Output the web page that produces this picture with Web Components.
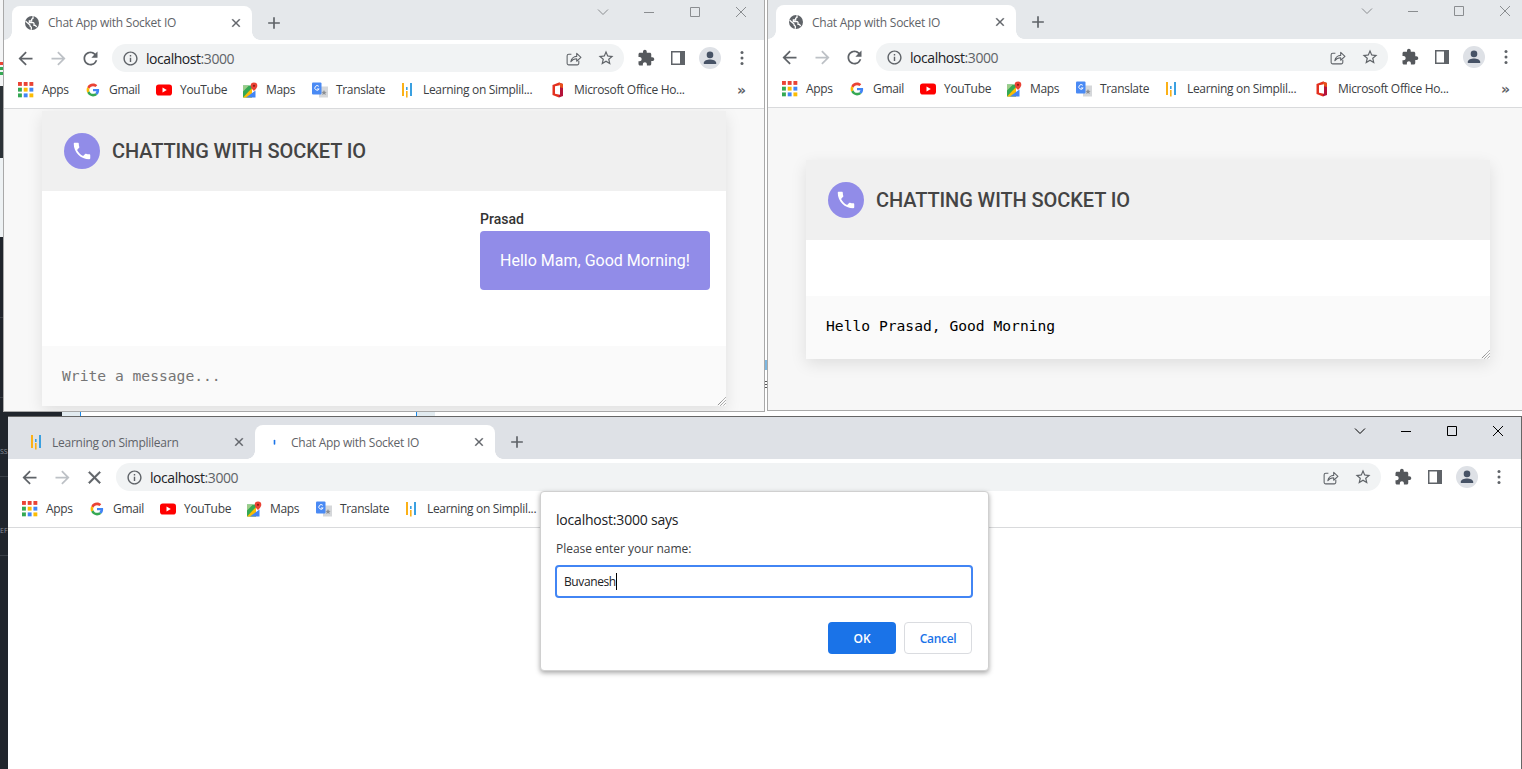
<!DOCTYPE html>
<html>
<head>
<meta charset="utf-8">
<title>Chat App with Socket IO</title>
<style>
    html, body{
        margin: 0;
        padding: 0;
        width: 1522px;
        height: 769px;
        overflow: hidden;
        background: #fff;
        font-family: "Open Sans", "Noto Sans", sans-serif;
    }
</style>
</head>
<body>
<desk-backdrop></desk-backdrop>

<browser-window style="left:3px; top:0; width:762px; height:412px; --strip:40px; --ctl-top:5px; --page:#f8f8f8; --lift:2px;" sides="left right bottom">
    <browser-tab slot="tabs" icon="globe" active>Chat App with Socket IO</browser-tab>
    <book-marks slot="bookmarks" more>
        <book-mark icon="apps" w="27">Apps</book-mark>
        <book-mark icon="google" w="31">Gmail</book-mark>
        <book-mark icon="youtube" w="46">YouTube</book-mark>
        <book-mark icon="maps" w="30">Maps</book-mark>
        <book-mark icon="translate" w="47">Translate</book-mark>
        <book-mark icon="learning" w="111">Learning on Simplil...</book-mark>
        <book-mark icon="office" w="113">Microsoft Office Ho...</book-mark>
    </book-marks>
    <chat-card slot="page" style="--top:2px; --body:155px; --box:60px;">
        <chat-message name="Prasad">Hello Mam, Good Morning!</chat-message>
        <span slot="box" style="color:#757575">Write a message...</span>
    </chat-card>
</browser-window>

<browser-window style="left:767px; top:0; width:762px; height:411px; --strip:39px; --ctl-top:4px; --page:#f7f7f7; --lift:0px;" sides="left right bottom">
    <browser-tab slot="tabs" icon="globe" active>Chat App with Socket IO</browser-tab>
    <book-marks slot="bookmarks" more>
        <book-mark icon="apps" w="27">Apps</book-mark>
        <book-mark icon="google" w="31">Gmail</book-mark>
        <book-mark icon="youtube" w="46">YouTube</book-mark>
        <book-mark icon="maps" w="30">Maps</book-mark>
        <book-mark icon="translate" w="47">Translate</book-mark>
        <book-mark icon="learning" w="111">Learning on Simplil...</book-mark>
        <book-mark icon="office" w="113">Microsoft Office Ho...</book-mark>
    </book-marks>
    <chat-card slot="page" style="--top:52px; --body:56px; --box:63px;">
        <span slot="box" style="color:#000">Hello Prasad, Good Morning</span>
    </chat-card>
</browser-window>

<browser-window style="left:8px; top:416px; width:1514px; height:353px; --strip:42px; --ctl-top:7px; --strip-bg:#dee1e6; --ctl:#000; --page:#fff; --edge:#666; --lift:0px;" sides="top right" loading>
    <browser-tab slot="tabs" icon="learning" style="width:239px">Learning on Simplilearn</browser-tab>
    <browser-tab slot="tabs" icon="spinner" active>Chat App with Socket IO</browser-tab>
    <book-marks slot="bookmarks">
        <book-mark icon="apps" w="27">Apps</book-mark>
        <book-mark icon="google" w="31">Gmail</book-mark>
        <book-mark icon="youtube" w="46">YouTube</book-mark>
        <book-mark icon="maps" w="30">Maps</book-mark>
        <book-mark icon="translate" w="47">Translate</book-mark>
        <book-mark icon="learning" w="111">Learning on Simplil...</book-mark>
    </book-marks>
</browser-window>

<prompt-dialog style="left:540px; top:491px;" value="Buvanesh" origin="localhost:3000 says">Please enter your name:</prompt-dialog>

<script>
// all icons live here, keyed by name
const ICONS = {
    globe: `<svg viewBox="0 0 24 24"><circle cx="12" cy="12" r="10.500" fill="#5f6368"/><path fill="none" stroke="#fff" stroke-width="1.900" d="M2.500 9.500L9 15v1.500l2 2V22M13.500 2v3l-2 1.500V9H8v2.500h6l1 1v3h2l2 2.500"/></svg>`,
    spinner: `<svg viewBox="0 0 16 16"><path d="M7.500 6.500v3.500" stroke="#1a73e8" stroke-width="1.600" fill="none" stroke-linecap="round"/></svg>`,
    close: `<svg viewBox="0 0 24 24"><path fill="#5f6368" stroke="#5f6368" stroke-width=".6" d="M19 6.410L17.590 5 12 10.590 6.410 5 5 6.410 10.590 12 5 17.590 6.410 19 12 13.410 17.590 19 19 17.590 13.410 12z"/></svg>`,
    plus: `<svg viewBox="0 0 24 24"><path fill="#5f6368" d="M19 13h-6v6h-2v-6H5v-2h6V5h2v6h6v2z"/></svg>`,
    back: `<svg viewBox="0 0 24 24"><path fill="#5f6368" d="M20 11H7.830l5.590-5.590L12 4l-8 8 8 8 1.410-1.410L7.830 13H20v-2z"/></svg>`,
    forward: `<svg viewBox="0 0 24 24"><path fill="#bdc1c6" d="M4 11h12.170l-5.590-5.590L12 4l8 8-8 8-1.410-1.410L16.170 13H4v-2z"/></svg>`,
    reload: `<svg viewBox="0 0 24 24"><path fill="#5f6368" d="M17.650 6.350A7.958 7.958 0 0 0 12 4c-4.420 0-7.990 3.580-7.990 8s3.570 8 7.990 8c3.730 0 6.840-2.550 7.730-6h-2.080A5.990 5.990 0 0 1 12 18c-3.310 0-6-2.690-6-6s2.690-6 6-6c1.660 0 3.140.69 4.220 1.780L13 11h7V4l-2.350 2.350z"/></svg>`,
    info: `<svg viewBox="0 0 24 24"><path fill="#5f6368" d="M11 7h2v2h-2zm0 4h2v6h-2zm1-9C6.480 2 2 6.480 2 12s4.480 10 10 10 10-4.480 10-10S17.520 2 12 2zm0 18c-4.410 0-8-3.590-8-8s3.590-8 8-8 8 3.590 8 8-3.590 8-8 8z"/></svg>`,
    share: `<svg viewBox="0 0 16 16"><g fill="none" stroke="#5f6368" stroke-width="1"><path d="M13 10v2.500a1.500 1.500 0 0 1-1.500 1.500h-8A1.500 1.500 0 0 1 2 12.500v-7A1.500 1.500 0 0 1 3.500 4H6"/><path stroke-linejoin="round" d="M5.500 11c.4-3 2.800-5 5.500-5V3.200L15 7l-4 3.600V8.200c-2.200 0-4.100.7-5.500 2.800z"/></g></svg>`,
    star: `<svg viewBox="0 0 24 24"><path fill="#5f6368" d="M22 9.240l-7.190-.62L12 2 9.190 8.630 2 9.240l5.460 4.730L5.820 21 12 17.270 18.180 21l-1.630-7.030L22 9.240zM12 15.400l-3.760 2.270 1-4.280-3.320-2.880 4.380-.38L12 6.100l1.710 4.040 4.380.38-3.320 2.880 1 4.280L12 15.400z"/></svg>`,
    puzzle: `<svg viewBox="0 0 24 24"><path fill="#55585c" d="M20.500 11H19V7c0-1.100-.9-2-2-2h-4V3.500C13 2.120 11.880 1 10.500 1S8 2.120 8 3.500V5H4c-1.100 0-1.990.9-1.990 2v3.800H3.500c1.490 0 2.700 1.210 2.700 2.700s-1.210 2.700-2.700 2.700H2V20c0 1.100.9 2 2 2h3.800v-1.500c0-1.490 1.210-2.700 2.700-2.700 1.490 0 2.700 1.210 2.700 2.700V22H17c1.100 0 2-.9 2-2v-4h1.500c1.380 0 2.500-1.120 2.500-2.500S21.880 11 20.500 11z"/></svg>`,
    panel: `<svg viewBox="0 0 14 14"><rect width="14" height="14" fill="#5f6368"/><rect x="1.500" y="1.500" width="7.500" height="11" fill="#fff"/></svg>`,
    avatar: `<svg viewBox="0 0 22 22"><circle cx="11" cy="11" r="11" fill="#dee1e6"/><path fill="#475366" d="M11 11.200a3.300 3.300 0 1 0 0-6.600 3.300 3.300 0 0 0 0 6.600zm0 1.300c-2.500 0-6.200 1.200-6.200 3.300v1.200h12.400v-1.200c0-2.100-3.700-3.300-6.200-3.300z"/></svg>`,
    dots: `<svg viewBox="0 0 16 16"><g fill="#5f6368"><circle cx="8" cy="2.500" r="1.500"/><circle cx="8" cy="8" r="1.500"/><circle cx="8" cy="13.500" r="1.500"/></g></svg>`,
    apps: `<svg viewBox="0 0 14 14">
        <rect x="0" width="3.400" height="3.400" fill="#ea4335"/><rect x="5" width="3.400" height="3.400" fill="#ea4335"/><rect x="10" width="3.400" height="3.400" fill="#ea4335"/>
        <rect x="0" y="5" width="3.400" height="3.400" fill="#34a853"/><rect x="5" y="5" width="3.400" height="3.400" fill="#fbbc05"/><rect x="10" y="5" width="3.400" height="3.400" fill="#4285f4"/>
        <rect x="0" y="10" width="3.400" height="3.400" fill="#34a853"/><rect x="5" y="10" width="3.400" height="3.400" fill="#4285f4"/><rect x="10" y="10" width="3.400" height="3.400" fill="#fbbc05"/></svg>`,
    google: `<svg viewBox="-6 -6 60 60"><path fill="#EA4335" d="M24 9.500c3.540 0 6.710 1.220 9.210 3.600l6.850-6.850C35.900 2.380 30.470 0 24 0 14.620 0 6.510 5.380 2.560 13.220l7.980 6.190C12.430 13.720 17.740 9.500 24 9.500z"/><path fill="#4285F4" d="M46.980 24.550c0-1.570-.15-3.090-.38-4.550H24v9.020h12.940c-.58 2.960-2.260 5.480-4.780 7.180l7.730 6c4.510-4.180 7.090-10.360 7.090-17.650z"/><path fill="#FBBC05" d="M10.530 28.590c-.48-1.450-.76-2.990-.76-4.590s.27-3.140.76-4.590l-7.980-6.190C.92 16.460 0 20.120 0 24c0 3.880.92 7.540 2.560 10.780l7.970-6.190z"/><path fill="#34A853" d="M24 48c6.480 0 11.930-2.130 15.890-5.810l-7.730-6c-2.150 1.450-4.920 2.300-8.160 2.300-6.260 0-11.570-4.220-13.470-9.910l-7.980 6.190C6.510 42.620 14.620 48 24 48z"/></svg>`,
    youtube: `<svg viewBox="0 0 16 16"><rect x="0" y="2.500" width="16" height="11" rx="2.800" fill="#f00"/><path d="M6.500 5.500v5L10.800 8z" fill="#fff"/></svg>`,
    maps: `<svg viewBox="0 0 16 16"><path d="M1 3.500h9v12H1z" fill="#34a853"/><path d="M1 15.500L10 6v9.500z" fill="#fbbc05"/><path d="M4 15.500h9.500V8.500z" fill="#4285f4"/><path d="M1 3.500h6L1 9.500z" fill="#9ccc8a"/><path d="M12 0.500a3.300 3.300 0 0 0-3.300 3.300c0 2.400 3.300 5.200 3.300 5.200s3.300-2.800 3.300-5.200A3.300 3.300 0 0 0 12 .5z" fill="#ea4335"/><circle cx="12" cy="3.800" r="1.100" fill="#8e1c14"/></svg>`,
    translate: `<svg viewBox="0 0 16 16"><rect x="7" y="4.500" width="9" height="11" fill="#d5d7da"/><path d="M12 8l.8 1.800 1.900.1-1.500 1.200.5 1.900-1.700-1-1.700 1 .5-1.900-1.500-1.200 1.900-.1z" fill="#8a8d91"/><rect x="0" y="0.500" width="9.500" height="12" rx="1" fill="#4a8af4"/><path d="M6.800 4.300a2.300 2.300 0 1 0 .4 2.700H5" fill="none" stroke="#fff" stroke-width="1"/></svg>`,
    learning: `<svg viewBox="0 0 16 16"><rect x="3" y="1" width="2" height="13" fill="#fbb117"/><rect x="7" y="5" width="1.600" height="3" fill="#3aa0e0"/><rect x="7" y="9" width="1.600" height="6.500" fill="#fbb117"/><rect x="11" y="1" width="2" height="13" fill="#3aa0e0"/></svg>`,
    office: `<svg viewBox="0 0 16 16"><path d="M9 .5L2.500 3v10L9 15.500z" fill="#e3301f"/><path d="M9 .5L13 2v12l-4 1.500z" fill="#b5123a"/><path d="M9 .5L13 2v4L9 5z" fill="#e8501c"/><path d="M5 4.300L10 3.300v9.400L5 11.800z" fill="#fff"/></svg>`,
    phone: `<svg viewBox="0 0 24 24"><path fill="#fff" d="M6.620 10.790c1.440 2.830 3.760 5.140 6.590 6.590l2.200-2.200c.27-.27.67-.36 1.020-.24 1.120.37 2.330.57 3.570.57.55 0 1 .45 1 1V20c0 .55-.45 1-1 1-9.390 0-17-7.610-17-17 0-.55.45-1 1-1h3.500c.55 0 1 .45 1 1 0 1.250.2 2.450.57 3.570.11.35.03.74-.25 1.020l-2.200 2.200z"/></svg>`
};

class UiIcon extends HTMLElement{
    constructor(){
        super();
        this.attachShadow({ mode: 'open' });
    }
    connectedCallback(){
        const size = this.getAttribute("size") || 16;
        this.shadowRoot.innerHTML = `
        <style>
            :host{ display: inline-flex; flex: none; width: ${size}px; height: ${size}px; }
            svg{ display: block; width: 100%; height: 100%; }
        </style>
        ${ICONS[this.getAttribute("name")] || ""}`;
    }
}
customElements.define("ui-icon", UiIcon);

// bits of whatever sits behind the windows
class DeskBackdrop extends HTMLElement{
    constructor(){
        super();
        this.attachShadow({ mode: 'open' });
        const bits = [
            [0, 0, 3, 86, "#f4f5f6"],
            [0, 62, 3, 3, "#ea4335"], [0, 67, 3, 3, "#34a853"], [0, 72, 3, 3, "#34a853"],
            [0, 86, 3, 72, "#2c3237"],
            [0, 158, 3, 79, "#eef2f4"],
            [0, 237, 3, 180, "#20252c"],
            [0, 411, 62, 5, "#20252c"],
            [0, 416, 8, 353, "#20252c"],
            [62, 411, 18, 5, "#e2ebf0"],
            [80, 411, 1, 5, "#1a88e8"],
            [416, 411, 1, 5, "#1a88e8"],
            [417, 411, 18, 5, "#e2ebf0"],
            [765, 360, 2, 10, "#7db7e0"],
            [765, 381, 2, 1, "#555"], [765, 384, 2, 1, "#555"], [765, 387, 2, 1, "#555"],
            [0, 317, 3, 1, "#3a3f46"], [0, 397, 3, 1, "#3a3f46"],
            [0, 476, 8, 1, "#3a3f46"], [0, 555, 8, 1, "#3a3f46"]
        ];
        this.shadowRoot.innerHTML = `
        <style>
            :host{ position: absolute; inset: 0; display: block; overflow: hidden; }
            div{ position: absolute; }
            span{
                position: absolute;
                left: 0;
                font: 7px/10px "Open Sans", sans-serif;
                color: #8a9098;
            }
        </style>
        ${bits.map(b => `<div style="left:${b[0]}px;top:${b[1]}px;width:${b[2]}px;height:${b[3]}px;background:${b[4]}"></div>`).join("")}
        <span style="top:447px">SS</span>
        <span style="top:526px">EF</span>`;
    }
}
customElements.define("desk-backdrop", DeskBackdrop);

class BrowserWindow extends HTMLElement{
    constructor(){
        super();
        this.attachShadow({ mode: 'open' });
    }
    connectedCallback(){
        const sides = (this.getAttribute("sides") || "").split(" ");
        const edge = s => sides.includes(s) ? "1px solid var(--edge, #a9a9a9)" : "0";
        const firstStop = this.hasAttribute("loading") ? "close" : "reload";
        this.shadowRoot.innerHTML = `
        <style>
            :host{
                position: absolute;
                display: flex;
                flex-direction: column;
                box-sizing: border-box;
                overflow: hidden;
                background: var(--page, #fff);
                border-top: ${edge("top")};
                border-left: ${edge("left")};
                border-right: ${edge("right")};
                border-bottom: ${edge("bottom")};
                color: #3c4043;
            }
            .strip{
                flex: none;
                display: flex;
                align-items: flex-end;
                height: var(--strip);
                padding-left: 8px;
                background: var(--strip-bg, #e5e8eb);
            }
            .plus{
                display: flex;
                align-items: center;
                justify-content: center;
                width: 28px;
                height: 34px;
                margin-left: 8px;
            }
            .controls{
                display: flex;
                align-self: flex-start;
                margin-left: auto;
                margin-top: var(--ctl-top);
                color: var(--ctl, #8a8d90);
            }
            .controls div{
                display: flex;
                align-items: center;
                justify-content: center;
                width: 46px;
                height: 14px;
            }
            .controls svg{ width: 14px; height: 14px; display: block; }
            .toolbar{
                flex: none;
                display: flex;
                align-items: center;
                height: 36px;
                padding: 0 6px;
                background: #fff;
            }
            .btn{
                flex: none;
                display: flex;
                align-items: center;
                justify-content: center;
                width: 32px;
                height: 28px;
            }
            .back{ margin-left: -1px; margin-right: 1px; }
            .omni{
                flex: 1;
                display: flex;
                align-items: center;
                height: 28px;
                margin: 0 6px;
                padding: 0 2px 0 10px;
                background: #f1f3f4;
                border-radius: 14px;
            }
            .url{
                flex: 1;
                margin-left: 7px;
                font-size: 14px;
                letter-spacing: -0.45px;
                color: #202124;
            }
            .url span{ color: #5f6368; }
            .share{ margin-right: 1px; margin-left: -1px; }
            .page{
                flex: 1;
                min-height: 0;
                overflow: hidden;
                border-top: 1px solid #d9dadc;
            }
        </style>
        <div class="strip">
            <slot name="tabs"></slot>
            <div class="plus"><ui-icon name="plus" size="20"></ui-icon></div>
            <div class="controls">
                <div><svg viewBox="0 0 14 14"><path d="M2 4.500l5 5 5-5" fill="none" stroke="currentColor"/></svg></div>
                <div><svg viewBox="0 0 14 14"><path d="M2 7.500h10" fill="none" stroke="currentColor"/></svg></div>
                <div><svg viewBox="0 0 14 14"><path d="M2.500 2.500h9v9h-9z" fill="none" stroke="currentColor"/></svg></div>
                <div><svg viewBox="0 0 14 14"><path d="M2 2l10 10M12 2L2 12" fill="none" stroke="currentColor"/></svg></div>
            </div>
        </div>
        <div class="toolbar">
            <div class="btn back"><ui-icon name="back" size="21"></ui-icon></div>
            <div class="btn"><ui-icon name="forward" size="21"></ui-icon></div>
            <div class="btn"><ui-icon name="${firstStop}" size="21"></ui-icon></div>
            <div class="omni">
                <ui-icon name="info" size="17"></ui-icon>
                <div class="url">localhost<span>:3000</span></div>
                <div class="btn share"><ui-icon name="share" size="17"></ui-icon></div>
                <div class="btn"><ui-icon name="star" size="18"></ui-icon></div>
            </div>
            <div class="btn"><ui-icon name="puzzle" size="18"></ui-icon></div>
            <div class="btn"><ui-icon name="panel" size="14"></ui-icon></div>
            <div class="btn"><ui-icon name="avatar" size="22"></ui-icon></div>
            <div class="btn"><ui-icon name="dots" size="16"></ui-icon></div>
        </div>
        <slot name="bookmarks"></slot>
        <div class="page"><slot name="page"></slot></div>`;
    }
}
customElements.define("browser-window", BrowserWindow);

class BrowserTab extends HTMLElement{
    constructor(){
        super();
        this.attachShadow({ mode: 'open' });
    }
    connectedCallback(){
        const active = this.hasAttribute("active");
        this.shadowRoot.innerHTML = `
        <style>
            :host{
                position: relative;
                display: flex;
                align-items: center;
                box-sizing: border-box;
                width: 240px;
                height: 34px;
                padding: 0 8px 0 12px;
                border-radius: 8px 8px 0 0;
                background: ${active ? "#fff" : "transparent"};
                font-size: 12px;
                letter-spacing: -0.26px;
                color: #5f6368;
            }
            .title{ flex: 1; margin-left: 8px; margin-bottom: var(--lift, 0px); white-space: nowrap; }
            .x{ display: flex; justify-content: center; width: 16px; }
            ${active ? `
            :host::before, :host::after{
                content: "";
                position: absolute;
                bottom: 0;
                width: 8px;
                height: 8px;
            }
            :host::before{ left: -8px; background: radial-gradient(circle at 0 0, transparent 7.5px, #fff 8px); }
            :host::after{ right: -8px; background: radial-gradient(circle at 100% 0, transparent 7.5px, #fff 8px); }
            ` : ""}
        </style>
        <ui-icon name="${this.getAttribute("icon")}" size="16"></ui-icon>
        <div class="title"><slot></slot></div>
        <div class="x"><ui-icon name="close" size="14"></ui-icon></div>`;
    }
}
customElements.define("browser-tab", BrowserTab);

class BookMarks extends HTMLElement{
    constructor(){
        super();
        this.attachShadow({ mode: 'open' });
    }
    connectedCallback(){
        this.shadowRoot.innerHTML = `
        <style>
            :host{
                flex: none;
                display: flex;
                align-items: center;
                box-sizing: border-box;
                height: 32px;
                padding: 0 0 5px 6px;
                background: #fff;
            }
            .more{
                margin-left: auto;
                margin-right: 18px;
                font: 700 14px "DejaVu Sans", sans-serif;
                color: #5f6368;
            }
        </style>
        <slot></slot>
        ${this.hasAttribute("more") ? `<div class="more">»</div>` : ""}`;
    }
}
customElements.define("book-marks", BookMarks);

class BookMark extends HTMLElement{
    constructor(){
        super();
        this.attachShadow({ mode: 'open' });
    }
    connectedCallback(){
        this.shadowRoot.innerHTML = `
        <style>
            :host{
                display: flex;
                align-items: center;
                padding: 0 8px;
                font-size: 12px;
                letter-spacing: -0.32px;
                color: #3c4043;
            }
            .label{
                width: ${this.getAttribute("w")}px;
                margin-left: 8px;
                margin-bottom: 1px;
                white-space: nowrap;
            }
        </style>
        <ui-icon name="${this.getAttribute("icon")}" size="16"></ui-icon>
        <div class="label"><slot></slot></div>`;
    }
}
customElements.define("book-mark", BookMark);

class ChatCard extends HTMLElement{
    constructor(){
        super();
        this.attachShadow({ mode: 'open' });
        this.shadowRoot.innerHTML = `
        <style>
            :host{
                display: block;
                box-sizing: border-box;
                width: 684px;
                margin: var(--top) auto 0;
                background: #fff;
                box-shadow: 0 5px 15px rgba(0, 0, 0, 0.1);
            }
            header{
                display: flex;
                align-items: center;
                gap: 12px;
                height: 80px;
                padding-left: 22px;
                background: #f0f0f0;
            }
            .round{
                display: flex;
                align-items: center;
                justify-content: center;
                width: 36px;
                height: 36px;
                border-radius: 50%;
                background: #918ce8;
            }
            h1{
                margin: 0;
                font: 500 20px Roboto, sans-serif;
                letter-spacing: -0.09px;
                color: #444;
            }
            .body{
                display: flex;
                justify-content: flex-end;
                box-sizing: border-box;
                height: var(--body);
                padding: 20px 16px 0;
            }
            .box{
                position: relative;
                box-sizing: border-box;
                height: var(--box);
                padding: 20px 20px 0;
                background: #fafafa;
                font: 14.65px/19px "DejaVu Sans Mono", monospace;
            }
            .grip{
                position: absolute;
                right: 0;
                bottom: 0;
                width: 9px;
                height: 9px;
            }
        </style>
        <header>
            <div class="round"><ui-icon name="phone" size="22"></ui-icon></div>
            <h1>CHATTING WITH SOCKET IO</h1>
        </header>
        <div class="body"><slot></slot></div>
        <div class="box">
            <slot name="box"></slot>
            <svg class="grip" viewBox="0 0 9 9"><path d="M8.500.5l-8 8M8.500 3.500l-5 5M8.500 6.500l-2 2" stroke="#666" stroke-width="1" stroke-dasharray="1 .6" fill="none"/></svg>
        </div>`;
    }
}
customElements.define("chat-card", ChatCard);

class ChatMessage extends HTMLElement{
    constructor(){
        super();
        this.attachShadow({ mode: 'open' });
    }
    connectedCallback(){
        this.shadowRoot.innerHTML = `
        <style>
            :host{ display: block; font-family: Roboto, sans-serif; }
            .name{
                height: 20px;
                font: 500 14px/16px Roboto, sans-serif;
                color: #333;
            }
            .bubble{
                display: flex;
                align-items: center;
                justify-content: center;
                box-sizing: border-box;
                width: 230px;
                height: 59px;
                border-radius: 4px;
                background: #918ce8;
                color: #fff;
                font-size: 16px;
            }
        </style>
        <div class="name">${this.getAttribute("name")}</div>
        <div class="bubble"><slot></slot></div>`;
    }
}
customElements.define("chat-message", ChatMessage);

class PromptDialog extends HTMLElement{
    constructor(){
        super();
        this.attachShadow({ mode: 'open' });
    }
    connectedCallback(){
        this.shadowRoot.innerHTML = `
        <style>
            :host{
                position: absolute;
                display: block;
                box-sizing: border-box;
                width: 449px;
                height: 180px;
                padding: 16px 15px 0;
                background: #fff;
                border: 1px solid #d0d0d0;
                border-radius: 4px;
                box-shadow: 0 2px 5px rgba(0, 0, 0, 0.35);
                color: #3c4043;
                font-size: 12px;
            }
            .origin{
                height: 24px;
                font-size: 14px;
                line-height: 24px;
                letter-spacing: -0.2px;
                color: #202124;
            }
            .msg{
                margin-top: 8px;
                line-height: 18px;
                letter-spacing: -0.03px;
                color: #3c4043;
            }
            .field{
                display: flex;
                align-items: center;
                box-sizing: border-box;
                width: 418px;
                height: 33px;
                margin: 7px 0 0 -1px;
                padding-left: 7px;
                border: 2px solid #4285f4;
                border-radius: 4px;
                letter-spacing: -0.4px;
                color: #202124;
            }
            .caret{
                width: 1px;
                height: 17px;
                background: #000;
            }
            .actions{
                display: flex;
                justify-content: flex-end;
                gap: 8px;
                width: 417px;
                margin: 24px 0 0 -1px;
            }
            .b{
                display: flex;
                align-items: center;
                justify-content: center;
                box-sizing: border-box;
                width: 68px;
                height: 32px;
                border-radius: 4px;
                font-weight: 600;
            }
            .ok{ background: #1a73e8; color: #fff; }
            .cancel{ border: 1px solid #dadce0; color: #1a73e8; letter-spacing: -0.3px; }
        </style>
        <div class="origin">${this.getAttribute("origin")}</div>
        <div class="msg"><slot></slot></div>
        <div class="field"><span>${this.getAttribute("value")}</span><div class="caret"></div></div>
        <div class="actions">
            <div class="b ok">OK</div>
            <div class="b cancel">Cancel</div>
        </div>`;
    }
}
customElements.define("prompt-dialog", PromptDialog);
</script>
</body>
</html>
